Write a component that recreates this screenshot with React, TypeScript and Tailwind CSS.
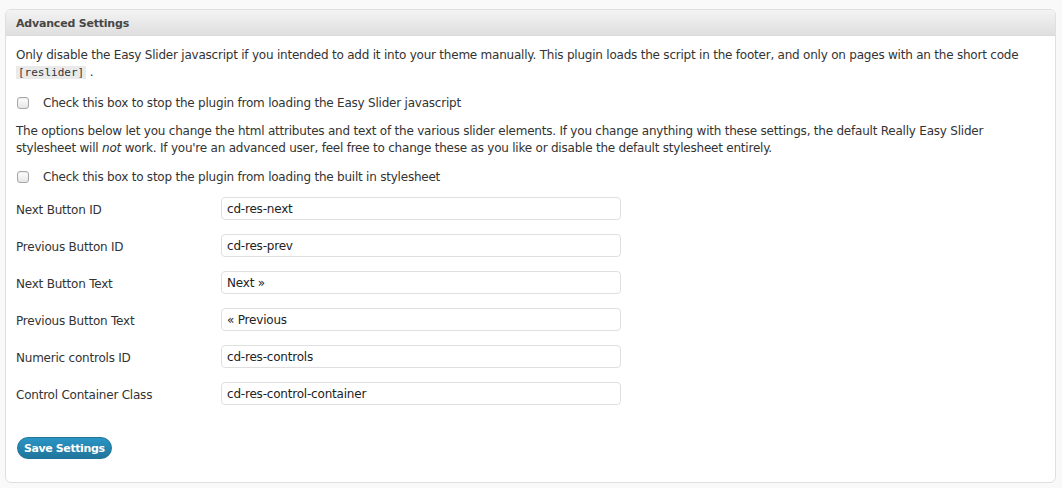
import React from 'react'

const fields = [
  { label: 'Next Button ID', value: 'cd-res-next' },
  { label: 'Previous Button ID', value: 'cd-res-prev' },
  { label: 'Next Button Text', value: 'Next »' },
  { label: 'Previous Button Text', value: '« Previous' },
  { label: 'Numeric controls ID', value: 'cd-res-controls' },
  { label: 'Control Container Class', value: 'cd-res-control-container' },
]

function Check({ text }: { text: string }) {
  return (
    <label className="flex items-center h-[18px]">
      <span className="ml-[1px] w-[12px] h-[12px] rounded-[3px] border border-[#a8a8a8] bg-gradient-to-b from-white to-[#e6e6e6] shadow-[inset_0_1px_1px_rgba(0,0,0,0.08)]" />
      <span className="ml-[14px]">{text}</span>
    </label>
  )
}

export default function App() {
  return (
    <div className="w-[1062px] h-[488px] bg-[#f9f9f9] pt-[9px] px-[5px] text-[#333] text-[12px] leading-[17px] tracking-[-0.22px] font-['DejaVu_Sans',sans-serif]">
      <div className="h-[474px] w-[1051px] rounded-[6px] border border-[#dfdfdf] bg-white overflow-hidden">
        <div className="h-[26px] flex items-center pl-[10px] bg-gradient-to-b from-[#f3f3f3] to-[#dfdfdf] border-b border-[#dadada]">
          <h3 className="mt-[1px] font-bold text-[#464646] text-[11px] tracking-[-0.2px]">Advanced Settings</h3>
        </div>
        <div className="pl-[10px] pr-[10px] pt-[11px]">
          <p>
            Only disable the Easy Slider javascript if you intended to add it into your theme manually. This plugin loads the script in the footer, and only on pages with an the short code
            <br />
            <code className="bg-[#eaeaea] px-[2px] text-[11px] tracking-normal font-['DejaVu_Sans_Mono',monospace]">[reslider]</code> .
          </p>
          <div className="mt-[13px]">
            <Check text="Check this box to stop the plugin from loading the Easy Slider javascript" />
          </div>
          <p className="mt-[11px]">
            The options below let you change the html attributes and text of the various slider elements. If you change anything with these settings, the default Really Easy Slider
            <br />
            stylesheet will <em>not</em> work. If you're an advanced user, feel free to change these as you like or disable the default stylesheet entirely.
          </p>
          <div className="mt-[11px]">
            <Check text="Check this box to stop the plugin from loading the built in stylesheet" />
          </div>
          <div className="mt-[11px] flex flex-col gap-[14px]">
            {fields.map((f) => (
              <div key={f.label} className="flex items-center">
                <span className="w-[205px] pt-[3px]">{f.label}</span>
                <input
                  readOnly
                  value={f.value}
                  className="w-[400px] h-[23px] rounded-[4px] border border-[#dfdfdf] bg-white px-[5px] text-[12px] text-[#222] tracking-[-0.2px] outline-none"
                />
              </div>
            ))}
          </div>
          <button className="mt-[32px] ml-[1px] h-[22px] px-[6px] rounded-full border border-[#21759b] bg-gradient-to-b from-[#2a95c5] to-[#21759b] text-white text-[11px] font-bold leading-none tracking-[-0.4px]">
            Save Settings
          </button>
        </div>
      </div>
    </div>
  )
}
